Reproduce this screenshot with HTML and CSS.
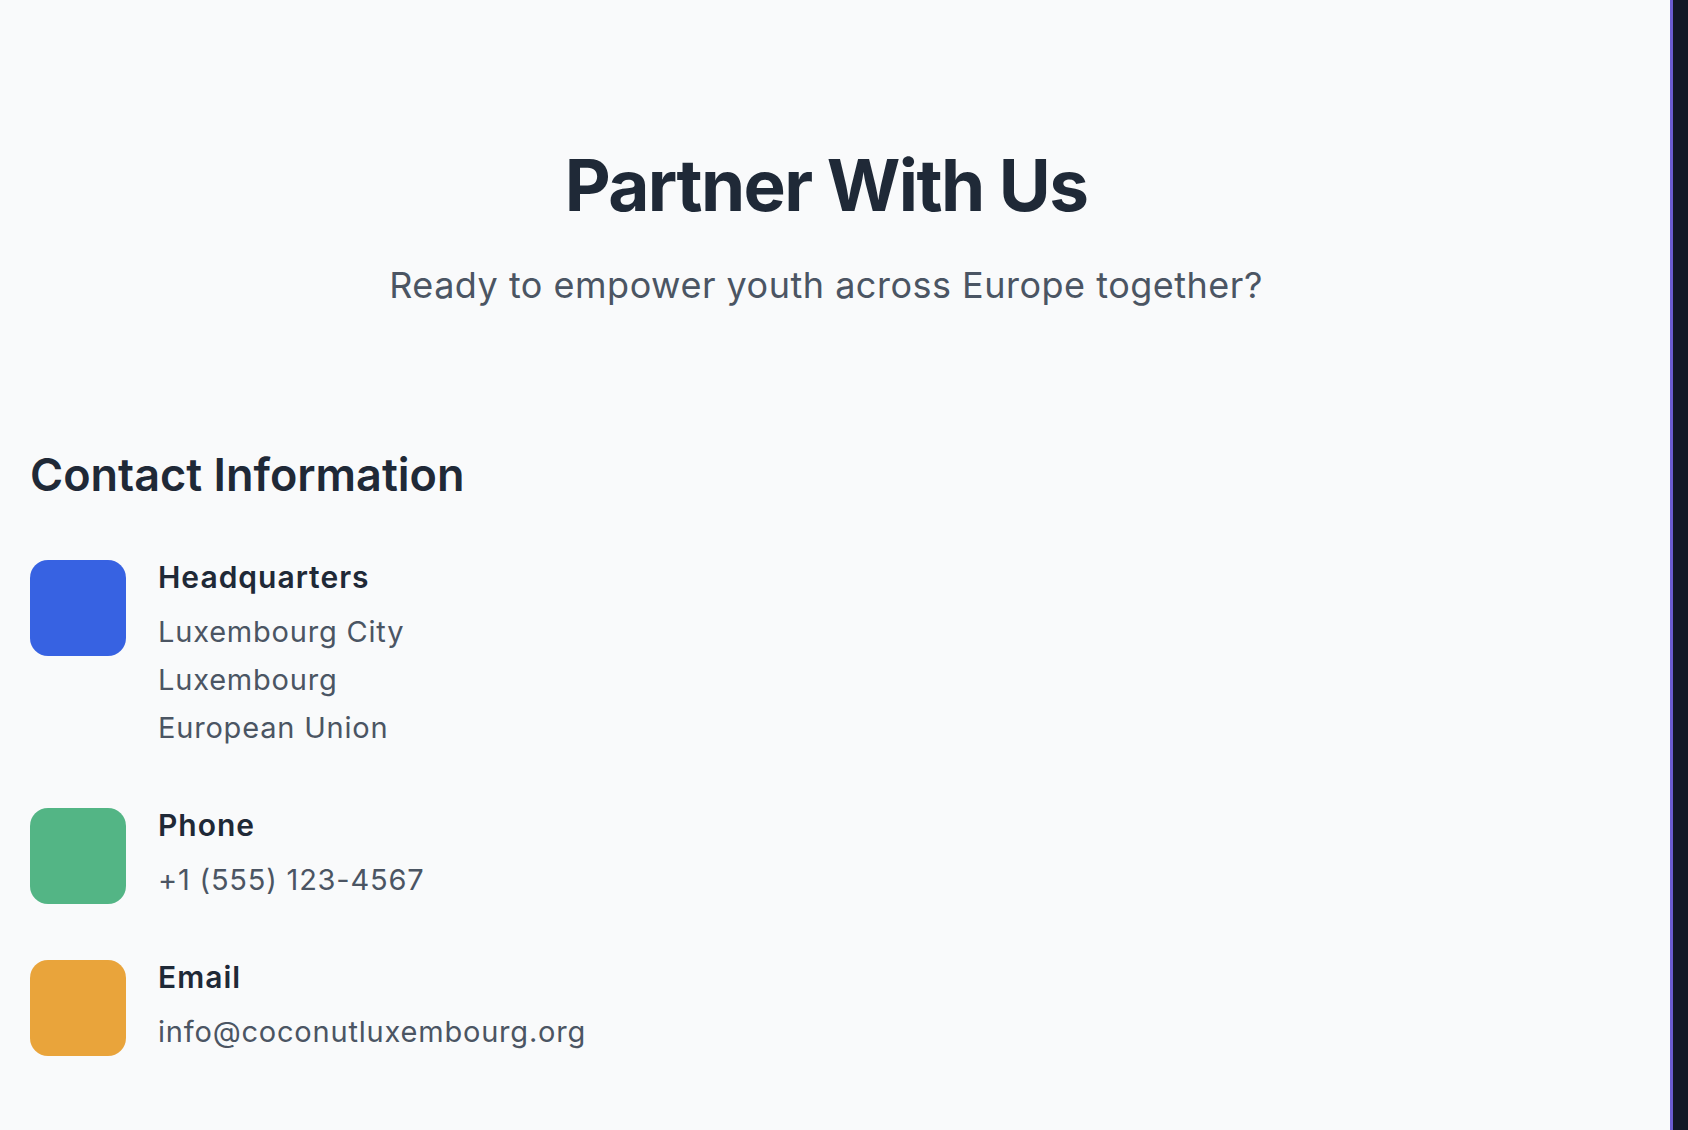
FILE: index.html
```html
<!DOCTYPE html>
<html lang="en">
<head>
<meta charset="utf-8">
<title>Partner With Us</title>
<link rel="stylesheet" href="styles.css">
</head>
<body>
<div class="layout">
  <main class="main">
    <section class="hero">
      <h1 class="hero-title">Partner With Us</h1>
      <p class="hero-sub">Ready to empower youth across Europe together?</p>
    </section>
    <section class="contact">
      <h2 class="contact-heading">Contact Information</h2>
      <div class="contact-list">
        <div class="contact-item">
          <div class="contact-icon icon-blue"></div>
          <div class="contact-body">
            <h3 class="contact-title">Headquarters</h3>
            <p class="contact-text">Luxembourg City<br>Luxembourg<br>European Union</p>
          </div>
        </div>
        <div class="contact-item">
          <div class="contact-icon icon-green"></div>
          <div class="contact-body">
            <h3 class="contact-title">Phone</h3>
            <p class="contact-text">+1 (555) 123-4567</p>
          </div>
        </div>
        <div class="contact-item">
          <div class="contact-icon icon-orange"></div>
          <div class="contact-body">
            <h3 class="contact-title">Email</h3>
            <p class="contact-text">info@coconutluxembourg.org</p>
          </div>
        </div>
      </div>
    </section>
  </main>
  <aside class="side"></aside>
</div>
</body>
</html>
```
FILE: styles.css
```css
html, body {
  margin: 0;
  padding: 0;
  height: 100%;
}
body {
  background: #f9fafb;
  font-family: Inter, "Noto Sans", "Liberation Sans", sans-serif;
  color: #1f2937;
  overflow: hidden;
}
.layout {
  display: flex;
  height: 1130px;
}
.main {
  flex: 1;
  padding: 149px 48px 0 30px;
  min-width: 0;
}
.side {
  width: 15px;
  flex: 0 0 15px;
  background: #111827;
  border-left: 3px solid #6a5cd2;
}
.hero {
  text-align: center;
}
.hero-title {
  margin: 0;
  font-size: 71px;
  line-height: 72px;
  font-weight: 700;
  letter-spacing: -1.6px;
  color: #1f2937;
}
.hero-sub {
  margin: 40px 0 0;
  font-size: 36px;
  line-height: 48px;
  letter-spacing: 0.5px;
  color: #4b5563;
}
.contact-heading {
  margin: 139px 0 0;
  font-size: 45px;
  line-height: 54px;
  font-weight: 600;
  color: #1f2937;
}
.contact-list {
  margin-top: 58px;
  display: flex;
  flex-direction: column;
  gap: 56px;
}
.contact-item {
  display: flex;
  align-items: flex-start;
  gap: 32px;
}
.contact-icon {
  width: 96px;
  height: 96px;
  flex: 0 0 96px;
  border-radius: 18px;
}
.icon-blue { background: #3762e2; }
.icon-green { background: #53b585; }
.icon-orange { background: #e9a43b; }
.contact-title {
  margin: 0;
  font-size: 30px;
  line-height: 35px;
  font-weight: 600;
  letter-spacing: 1px;
  color: #1f2937;
}
.contact-text {
  margin: 13px 0 0;
  font-size: 29px;
  line-height: 48px;
  letter-spacing: 0.8px;
  color: #4b5563;
}
```
